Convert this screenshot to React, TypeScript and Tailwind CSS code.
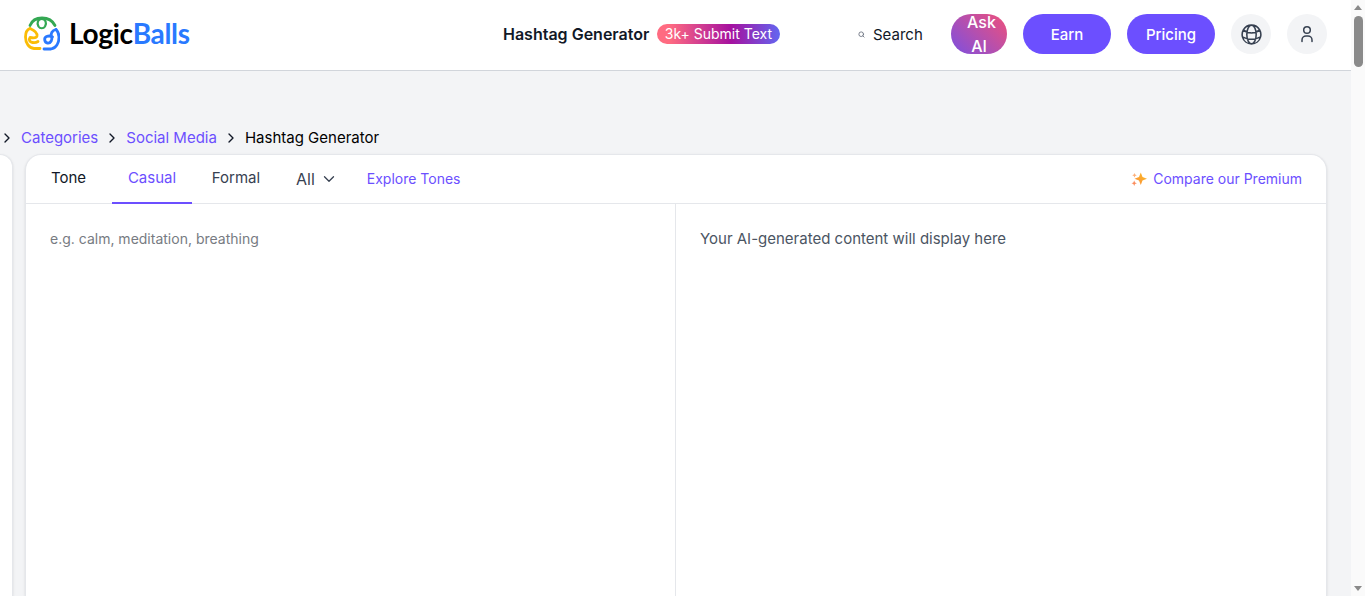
import { ChevronRight, ChevronDown, Search } from "lucide-react";
import { HiOutlineGlobeAlt } from "react-icons/hi2";

function Logo() {
  return (
    <svg width="36" height="36" viewBox="0 0 36 36" fill="none" strokeWidth="2.8" strokeLinecap="round" strokeLinejoin="round" className="shrink-0">
      <path d="M6 9.5C8 4.5 12.5 2 18 2C23.5 2 28.5 4.5 31 9.5" stroke="#34a853" />
      <path d="M14.5 10.5C12.5 6.5 14 3 17.8 3C21.5 3 23 6.5 21 10.5C19.5 12.8 16 12.8 14.5 10.5Z" stroke="#34a853" strokeWidth="2.2" />
      <path d="M16 32.5H10C5 32 1.5 27 1.5 21C1.5 16.5 3 13.5 6 12.5" stroke="#fbbc05" />
      <path d="M6 12.5C9.5 14 13.5 17 13 20C12.5 22.5 9 22 6 21.5C4.5 23.5 5.5 26 8.5 26.5C10.5 26.8 12.5 26.5 14 25.5" stroke="#fbbc05" />
      <path d="M20 33H27C32 32 35 27 35 21C35 18 34 15.5 32 13.5" stroke="#2979ff" />
      <path d="M32 13.5C28 14.5 26.5 17.5 27.5 20C28.5 23.5 27 27.5 23.5 27C20.5 26.5 19.5 22 22.5 20.5C24.5 19.8 27 20 28.5 21" stroke="#2979ff" />
    </svg>
  );
}

function Sparkle() {
  return (
    <svg width="16" height="16" viewBox="0 0 16 16" className="shrink-0">
      <defs>
        <linearGradient id="sp" x1="0" y1="1" x2="1" y2="0">
          <stop offset="0" stopColor="#fb8c3c" />
          <stop offset="1" stopColor="#fbbf24" />
        </linearGradient>
      </defs>
      <path d="M9.8 1.5L11.5 6L16 7.8L11.5 9.6L9.8 14L8 9.6L3.5 7.8L8 6Z" fill="url(#sp)" />
      <path d="M3.5 2L4.2 3.6L5.8 4.3L4.2 5L3.5 6.6L2.8 5L1.2 4.3L2.8 3.6Z" fill="#fdb07a" />
      <path d="M3.2 9.5L4 11.4L5.9 12.2L4 13L3.2 14.9L2.4 13L.5 12.2L2.4 11.4Z" fill="#fb8c5c" />
    </svg>
  );
}

function UserIcon() {
  return (
    <svg width="20" height="20" viewBox="0 0 20 20" fill="none" stroke="#374151" strokeWidth="1.5" strokeLinecap="round">
      <circle cx="10" cy="6" r="3.3" />
      <path d="M5 17.5V16C5 13.5 7 12 9 12H11C13 12 15 13.5 15 16V17.5" />
    </svg>
  );
}

function Crumb() {
  return <ChevronRight className="h-4 w-4 text-[#111827]" strokeWidth={2} />;
}

export default function App() {
  return (
    <div className="flex h-[596px] w-full overflow-hidden bg-[#fafafa] font-['Inter',sans-serif]">
      <div className="flex h-full min-w-0 flex-1 flex-col bg-[#f3f4f6]">
        <header className="flex h-[71px] shrink-0 items-center whitespace-nowrap border-b border-[#d1d5db] bg-white pb-[2px] pl-6 pr-6">
          <div className="flex w-[166px] shrink-0 items-center gap-[9px]">
            <Logo />
            <span className="mb-[2px] font-['Lato',sans-serif] text-[28px] font-bold leading-none tracking-[-0.3px] text-black">
              Logic<span className="text-[#2979ff]">Balls</span>
            </span>
          </div>
          <div className="ml-[313px] flex w-[277px] shrink-0 items-center justify-between">
            <span className="text-base font-semibold text-[#111827]">Hashtag Generator</span>
            <span className="flex h-5 items-center rounded-full bg-[linear-gradient(90deg,#ff6b81_10%,#a5119f_60%,#6366f1_100%)] px-2 text-sm text-white">
              3k+ Submit Text
            </span>
          </div>
          <div className="ml-[78px] flex shrink-0 items-center gap-2">
            <Search className="h-[7px] w-[7px] text-[#6b7280]" strokeWidth={3} />
            <span className="pt-[2px] text-[15px] text-[#111827]">Search</span>
          </div>
          <div className="ml-auto h-10 w-14 shrink-0 whitespace-normal rounded-full bg-[linear-gradient(45deg,#7c4fe0,#f0507a)] px-4 text-center text-base font-medium leading-6 text-white">
            <div className="-mt-1">Ask AI</div>
          </div>
          <div className="ml-4 flex h-10 w-[88px] shrink-0 items-center justify-center rounded-full bg-[#6c4fff] pt-[2px] text-[15px] font-medium text-white">Earn</div>
          <div className="ml-4 flex h-10 w-[88px] shrink-0 items-center justify-center rounded-full bg-[#6c4fff] pt-[2px] text-[15px] font-medium text-white">Pricing</div>
          <div className="ml-4 flex h-10 w-10 shrink-0 items-center justify-center rounded-full bg-[#f3f4f6] text-[#374151]">
            <HiOutlineGlobeAlt className="h-[25px] w-[25px]" />
          </div>
          <div className="ml-4 flex h-10 w-10 shrink-0 items-center justify-center rounded-full bg-[#f3f4f6]">
            <UserIcon />
          </div>
        </header>

        <main className="flex min-h-0 flex-1 flex-col pt-[56px]">
          <nav className="-ml-px flex h-[22px] items-center text-[15px] leading-[22px]">
            <Crumb />
            <span className="ml-[6px] text-[#6c4fff]">Categories</span>
            <span className="ml-[6px]"><Crumb /></span>
            <span className="ml-[6px] text-[#6c4fff]">Social Media</span>
            <span className="ml-[6px]"><Crumb /></span>
            <span className="ml-[6px] text-black">Hashtag Generator</span>
          </nav>
          <div className="mt-[5px] flex min-h-0 flex-1 gap-3">
            <div className="w-[13px] shrink-0 rounded-tr-2xl border-r border-t border-[#e5e7eb] bg-white shadow-sm" />
            <section className="flex w-[1302px] shrink-0 flex-col rounded-t-2xl border border-b-0 border-[#e5e7eb] bg-white shadow-sm">
              <div className="flex h-[49px] shrink-0 items-stretch border-b border-[#e5e7eb] pl-[25px] pr-6 text-[15px]">
                <div className="flex w-[61px] items-center pb-[2px] text-[#111827]">Tone</div>
                <div className="-mb-px flex w-20 items-center justify-center border-b-2 border-[#6c4fff] pb-[1px] text-[#6c4fff]">Casual</div>
                <div className="flex w-[88px] items-center justify-center pb-[2px] text-[#374151]">Formal</div>
                <div className="ml-4 flex items-center gap-[5px] text-base text-[#374151]">
                  All <ChevronDown className="h-[18px] w-[18px]" strokeWidth={1.75} />
                </div>
                <div className="ml-[29px] flex items-center text-sm text-[#6c4fff]">Explore Tones</div>
                <div className="ml-auto flex items-center gap-[6px] text-sm text-[#6c4fff]">
                  <Sparkle />
                  Compare our Premium
                </div>
              </div>
              <div className="flex min-h-0 flex-1">
                <div className="w-[650px] shrink-0 border-r border-[#e5e7eb] px-6 pt-[25px] text-sm leading-5 text-[#777b82]">
                  e.g. calm, meditation, breathing
                </div>
                <div className="flex-1 px-6 pt-[25px] text-[15px] leading-5 text-[#4b5563]">
                  Your AI-generated content will display here
                </div>
              </div>
            </section>
          </div>
        </main>
      </div>

      <div className="flex w-[14px] shrink-0 flex-col items-center bg-[#fafafa]">
        <svg width="10" height="16" viewBox="0 0 10 16" className="shrink-0"><path d="M1 10L5 5L9 10Z" fill="#8a8a8a" /></svg>
        <div className="h-[51px] w-[9px] rounded-full bg-[#8a8a8a]" />
        <svg width="10" height="16" viewBox="0 0 10 16" className="mt-auto shrink-0"><path d="M1 6L5 11L9 6Z" fill="#8a8a8a" /></svg>
      </div>
    </div>
  );
}
